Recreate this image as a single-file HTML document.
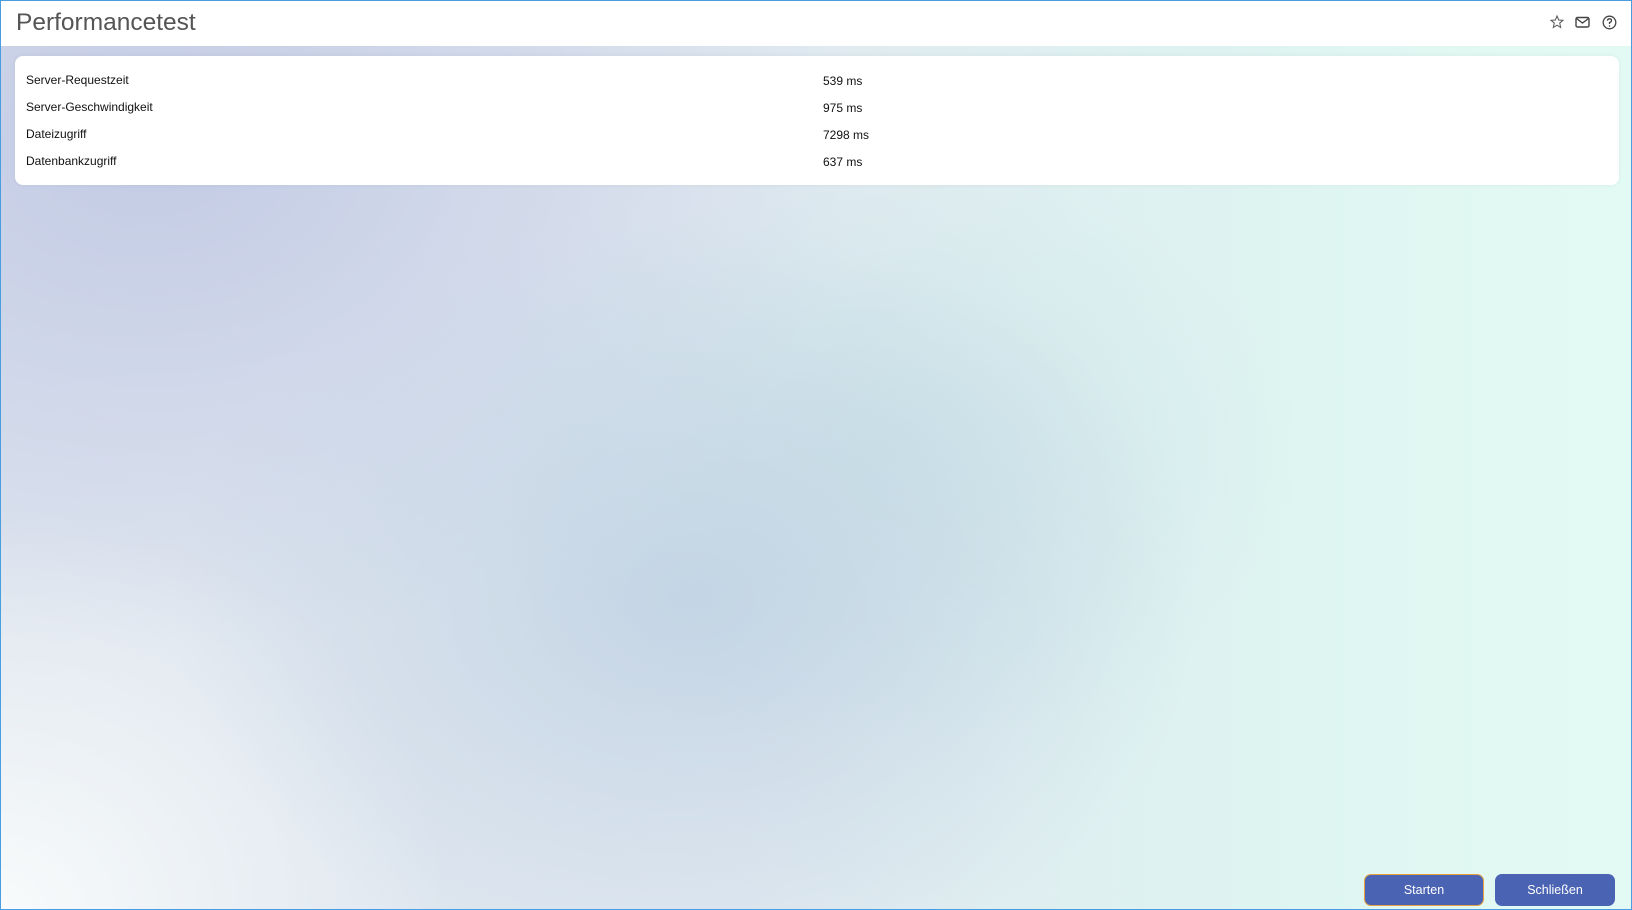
<!DOCTYPE html>
<html><head><meta charset="utf-8"><style>
*{box-sizing:border-box;margin:0;padding:0}
html,body{width:1632px;height:910px;overflow:hidden;font-family:"Liberation Sans",Arial,sans-serif}
body{position:relative;border:1px solid #4a9ee0;
background:
radial-gradient(ellipse 520px 380px at 690px 600px, rgba(190,208,226,0.8), rgba(190,208,226,0) 100%),
radial-gradient(ellipse 420px 300px at 880px 450px, rgba(198,226,230,0.7), rgba(198,226,230,0) 100%),
radial-gradient(ellipse 450px 400px at 0px 910px, #f8fbfb, rgba(255,255,255,0) 100%),
radial-gradient(ellipse 700px 500px at 150px 150px, #c3cbe5, rgba(195,203,229,0) 100%),
linear-gradient(90deg,#dde4ee 0%,#e0e8f0 45%,#def5f1 80%,#e3faf4 100%);}
.hdr{position:absolute;left:0;top:0;width:100%;height:45px;background:#fff}
.title{position:absolute;left:15px;top:8px;font-size:24.5px;color:#555}
.icons{position:absolute;top:14px;}
.card{position:absolute;left:14px;top:55px;width:1604px;height:129px;background:#fff;border-radius:8px;box-shadow:0 0 6px rgba(0,0,0,0.05)}
.row{position:absolute;font-size:12px;color:#111}
.btn{position:absolute;top:873px;width:120px;height:32px;background:#4a63b3;color:#fff;border-radius:7px;font-size:12.5px;text-align:center;line-height:32px}
</style></head><body>
<div class="hdr">
<div class="title">Performancetest</div>
<svg class="icons" style="left:1549px" width="14" height="14" viewBox="0 0 14 14"><path d="M7 1 L8.7 5 L13 5.3 L9.7 8.1 L10.7 12.5 L7 10.2 L3.3 12.5 L4.3 8.1 L1 5.3 L5.3 5 Z" fill="none" stroke="#555" stroke-width="1"/></svg>
<svg class="icons" style="left:1574px" width="15" height="14" viewBox="0 0 15 14"><rect x="1" y="2.5" width="13" height="9.5" rx="1.5" fill="none" stroke="#444" stroke-width="1.4"/><path d="M1.5 3.5 L7.5 8 L13.5 3.5" fill="none" stroke="#444" stroke-width="1.4"/></svg>
<svg class="icons" style="left:1601px" width="15" height="15" viewBox="0 0 15 15"><circle cx="7.5" cy="7.5" r="6.3" fill="none" stroke="#444" stroke-width="1.3"/><path d="M5.5 5.8 Q5.5 3.8 7.5 3.8 Q9.5 3.8 9.5 5.6 Q9.5 6.8 7.5 7.6 L7.5 9" fill="none" stroke="#444" stroke-width="1.3"/><circle cx="7.5" cy="11" r="0.8" fill="#444"/></svg>
</div>
<div class="card"></div>
<div class="row" style="left:25px;top:72px">Server-Requestzeit</div>
<div class="row" style="left:25px;top:99px">Server-Geschwindigkeit</div>
<div class="row" style="left:25px;top:126px">Dateizugriff</div>
<div class="row" style="left:25px;top:153px">Datenbankzugriff</div>
<div class="row" style="left:822px;top:73px">539 ms</div>
<div class="row" style="left:822px;top:100px">975 ms</div>
<div class="row" style="left:822px;top:127px">7298 ms</div>
<div class="row" style="left:822px;top:154px">637 ms</div>
<div class="btn" style="left:1363px;border:1px solid #e8a040;line-height:30px">Starten</div>
<div class="btn" style="left:1494px">Schließen</div>
</body></html>
